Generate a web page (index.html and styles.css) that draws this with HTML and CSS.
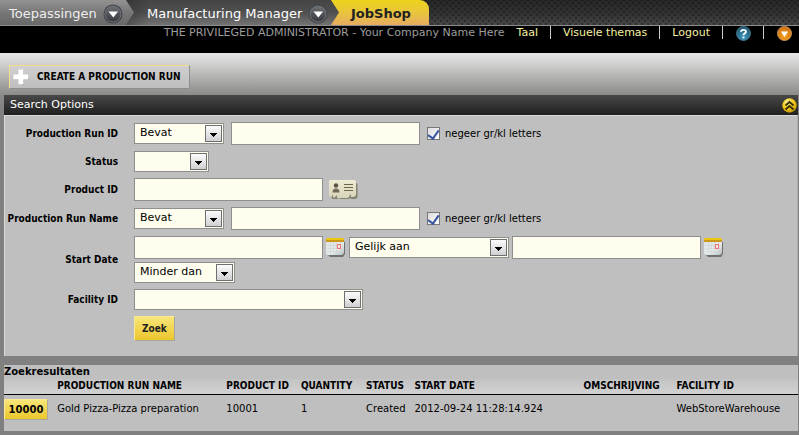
FILE: index.html
```html
<!DOCTYPE html>
<html lang="nl">
<head>
<meta charset="utf-8">
<title>JobShop</title>
<link rel="stylesheet" href="styles.css">
</head>
<body>
<svg class="defs" width="0" height="0" aria-hidden="true">
  <defs>
    <linearGradient id="btnFace" x1="0" y1="0" x2="0" y2="1"><stop offset="0" stop-color="#fdfdfd"/><stop offset="1" stop-color="#cfcfd2"/></linearGradient>
    <linearGradient id="knob" x1="0" y1="0" x2="0" y2="1"><stop offset="0" stop-color="#6c7075"/><stop offset="1" stop-color="#34373b"/></linearGradient>
    <radialGradient id="blue" cx=".5" cy=".75" r=".7"><stop offset="0" stop-color="#3f9ac0"/><stop offset="1" stop-color="#1c5670"/></radialGradient>
    <radialGradient id="orange" cx=".5" cy=".7" r=".7"><stop offset="0" stop-color="#f9a21c"/><stop offset="1" stop-color="#c96e12"/></radialGradient>
    <radialGradient id="gold" cx=".4" cy=".3" r=".8"><stop offset="0" stop-color="#fff3a8"/><stop offset=".5" stop-color="#f2c713"/><stop offset="1" stop-color="#b98a00"/></radialGradient>
    <linearGradient id="paper" x1="0" y1="0" x2="1" y2="1"><stop offset="0" stop-color="#dfe5e5"/><stop offset=".6" stop-color="#e6e9e9"/><stop offset="1" stop-color="#b9bcbc"/></linearGradient>
    <linearGradient id="cardFace" x1="0" y1="0" x2="0" y2="1"><stop offset="0" stop-color="#f0ecd4"/><stop offset="1" stop-color="#d8d4b8"/></linearGradient>
    <symbol id="drop" viewBox="0 0 17 17"><rect x=".5" y=".5" width="16" height="16" fill="url(#btnFace)" stroke="#6f6f6f"/><path d="M5 8h7v1h-1v1h-1v1H9v1H8v-1H7v-1H6V9H5z" fill="#000"/></symbol>
    <symbol id="tabKnob" viewBox="0 0 20 20"><circle cx="10" cy="10" r="9.500" fill="#3f4246"/><circle cx="10" cy="10" r="8" fill="url(#knob)" stroke="#70747a" stroke-width="1"/><path d="M5.500 7.500h9.500l-4.700 6z" fill="#fff"/></symbol>
    <symbol id="calendar" viewBox="0 0 19 19"><path d="M2 4h17v12l-2 3H4l-2-2z" fill="#6f7070"/><path d="M0 3h18v11q0 3-3 3H3q-3 0-3-3z" fill="url(#paper)"/><path d="M1 7.500h16M1 10.500h16M1 13.500h14M4.500 4v12M7.500 4v12M10.500 4v12M14.500 4v12" stroke="#cdd4d4" stroke-width=".6"/><path d="M0 1h18v3H0z" fill="#c9981c"/><path d="M1 0h16l1 2H0z" fill="#edc70c"/><rect x="11.500" y="6.500" width="3" height="4" fill="#fbe3e3" stroke="#f0737a"/></symbol>
  </defs>
</svg>

<header>
  <nav class="tabs">
    <a class="tab tab-apps" href="#">Toepassingen <svg width="20" height="20" aria-hidden="true"><use href="#tabKnob"/></svg></a>
    <a class="tab tab-manager" href="#">Manufacturing Manager <svg width="20" height="20" aria-hidden="true"><use href="#tabKnob"/></svg></a>
    <a class="tab tab-current" href="#">JobShop</a>
  </nav>
  <div class="userbar">
    <span class="who">THE PRIVILEGED ADMINISTRATOR - Your Company Name Here</span>
    <a class="first" href="#">Taal</a>
    <a href="#">Visuele themas</a>
    <a href="#">Logout</a>
    <a class="icon" href="#" aria-label="Help"><svg width="15" height="15" viewBox="0 0 15 15"><circle cx="7.500" cy="7.500" r="7" fill="url(#blue)" stroke="#4f8399" stroke-width=".8"/><path d="M5 5.800C5 3.300 10 3.200 10 5.700 10 7.400 7.500 7.200 7.500 9.200" fill="none" stroke="#fff" stroke-width="1.900"/><circle cx="7.500" cy="11.500" r="1.100" fill="#fff"/></svg></a>
    <a class="icon" href="#" aria-label="Menu"><svg width="15" height="15" viewBox="0 0 15 15"><circle cx="7.500" cy="7.500" r="7" fill="url(#orange)" stroke="#e0a468" stroke-width=".8"/><path d="M3.800 5.500h7.400L7.500 11z" fill="#fff"/></svg></a>
  </div>
</header>

<main>
  <button class="create" type="button"><svg width="16" height="16" viewBox="0 0 16 16" aria-hidden="true"><path d="M6 1h5v5h5v5h-5v5H6v-5H1V6h5z" fill="#999"/><path d="M5.500 0.500h5v5h5v5h-5v5h-5v-5h-5v-5h5z" fill="#fff"/></svg>CREATE A PRODUCTION RUN</button>

  <section class="panel">
    <div class="panel-title"><h2>Search Options</h2>
      <button class="collapse" type="button" aria-label="Inklappen"><svg width="15" height="15" viewBox="0 0 15 15"><circle cx="7.500" cy="7.500" r="7.200" fill="url(#gold)"/><path d="M3.500 7.500l4-3.500 4 3.500M3.500 11.500l4-3.500 4 3.500" fill="none" stroke="#3a3000" stroke-width="1.900"/></svg></button>
    </div>
    <form class="search">
      <label for="runId">Production Run ID</label>
      <div class="fields">
        <span class="pick op"><select aria-label="Operator"><option>Bevat</option></select><svg aria-hidden="true"><use href="#drop"/></svg></span>
        <input class="text" id="runId" type="text">
        <label class="check"><input type="checkbox" checked><span>negeer gr/kl letters</span></label>
      </div>
      <label for="status">Status</label>
      <div class="fields"><span class="pick status"><select id="status"><option></option></select><svg aria-hidden="true"><use href="#drop"/></svg></span></div>
      <label for="product">Product ID</label>
      <div class="fields lookup"><input class="text" id="product" type="text">
        <button class="plain" type="button" aria-label="Zoek product"><svg width="30" height="20" viewBox="0 0 30 20"><path d="M3 3h25q1.500 0 1.500 2v11q0 3-3 3h-3l-1-1-2 1h-8l-1-1-2 1H4z" fill="#85826f"/><path d="M2 0h24q2 0 2 2v12q0 3-3 3h-2v-3l-3 4H9v-3l-3 3-1-1v-2l-3 2-1-1V2q0-2 1-2z" fill="url(#cardFace)"/><circle cx="8" cy="5.500" r="2.200" fill="#5a5444"/><path d="M4.500 12.500q0-4 3.500-4t3.500 4z" fill="#716a56"/><path d="M16 4.500h9M16 7.500h9M16 10.500h9" stroke="#6b644f" stroke-width="1.200"/></svg></button>
      </div>
      <label for="runName">Production Run Name</label>
      <div class="fields">
        <span class="pick op"><select aria-label="Operator"><option>Bevat</option></select><svg aria-hidden="true"><use href="#drop"/></svg></span>
        <input class="text" id="runName" type="text">
        <label class="check"><input type="checkbox" checked><span>negeer gr/kl letters</span></label>
      </div>
      <label for="start">Start Date</label>
      <div class="fields dates">
        <input class="text" id="start" type="text">
        <button class="plain cal" type="button" aria-label="Kalender"><svg width="19" height="19"><use href="#calendar"/></svg></button>
        <span class="pick equal"><select aria-label="Operator"><option>Gelijk aan</option></select><svg aria-hidden="true"><use href="#drop"/></svg></span>
        <input class="text" type="text" aria-label="Einddatum">
        <button class="plain cal" type="button" aria-label="Kalender"><svg width="19" height="19"><use href="#calendar"/></svg></button>
        <span class="pick less"><select aria-label="Operator"><option>Minder dan</option></select><svg aria-hidden="true"><use href="#drop"/></svg></span>
      </div>
      <label for="facility">Facility ID</label>
      <div class="fields"><span class="pick facility"><select id="facility"><option></option></select><svg aria-hidden="true"><use href="#drop"/></svg></span></div>
      <div class="fields submit"><button class="gold zoek" type="submit">Zoek</button></div>
    </form>
  </section>

  <section class="results">
    <h3>Zoekresultaten</h3>
    <table>
      <colgroup><col class="c-id"><col class="c-name"><col class="c-product"><col class="c-qty"><col class="c-status"><col class="c-start"><col class="c-desc"><col></colgroup>
      <thead><tr><th></th><th>PRODUCTION RUN NAME</th><th>PRODUCT ID</th><th>QUANTITY</th><th>STATUS</th><th>START DATE</th><th>OMSCHRIJVING</th><th>FACILITY ID</th></tr></thead>
      <tbody><tr><td><a class="gold" href="#">10000</a></td><td>Gold Pizza-Pizza preparation</td><td>10001</td><td>1</td><td>Created</td><td>2012-09-24 11:28:14.924</td><td></td><td>WebStoreWarehouse</td></tr></tbody>
    </table>
  </section>
</main>
</body>
</html>
```
FILE: styles.css
```css
* { box-sizing: border-box; }
body {
  margin: 0;
  min-height: 100vh;
  background: #808080;
  color: #000;
  font: 10px/14px "DejaVu Sans", Verdana, sans-serif;
}
.defs { position: absolute; }
a { text-decoration: none; color: inherit; }
svg { display: block; flex: none; }
h2, h3 { margin: 0; }
input, select, button { font: inherit; color: inherit; margin: 0; }

.tabs {
  display: flex;
  height: 26px;
  border-bottom: 1px solid #8d8d8d;
  background:
    radial-gradient(circle, #1116 1px, transparent 2px) 0 0 / 6px 6px,
    radial-gradient(circle, #1116 1px, transparent 2px) 3px 3px / 6px 6px,
    linear-gradient(#282828, #363636 60%, #4a4a4a);
}
.tab {
  display: flex;
  align-items: center;
  gap: 6px;
  height: 25px;
  padding-top: 2px;
  font-size: 13px;
  color: #fff;
  white-space: nowrap;
  clip-path: polygon(0 0, calc(100% - 8px) 0, 100% 50%, calc(100% - 8px) 100%, 0 100%);
}
.tab-apps {
  z-index: 3;
  width: 134px;
  padding-left: 9px;
  color: #eee;
  background: linear-gradient(#929292, #777 50%, #686868);
}
.tab-manager {
  z-index: 2;
  width: 213px;
  margin-left: -8px;
  padding-left: 21px;
  background: linear-gradient(90deg, #2226, transparent 24px), linear-gradient(#444, #505050 50%, #727272);
}
.tab-current {
  z-index: 1;
  width: 98px;
  margin-left: -8px;
  padding-left: 20px;
  border-top-right-radius: 9px;
  clip-path: none;
  color: #222;
  font-weight: bold;
  background: linear-gradient(#ecd31c, #e9c53c 50%, #e6ab62);
}

.userbar {
  display: flex;
  justify-content: flex-end;
  height: 27px;
  background: #000;
  color: #9c9c9c;
  font-size: 11px;
}
.userbar a {
  height: 13px;
  padding: 0 12px;
  border-left: 1px solid #ccc;
  color: #f5f1a0;
}
.userbar a.first { border-left: 0; }
.userbar .icon { padding-left: 13px; }
.userbar .icon:last-child { padding-right: 7px; }

main {
  padding: 12px 1px 4px 4px;
  background: linear-gradient(#e8e8e8, #8b8b88 42px, #808080 60px);
}
.create {
  display: flex;
  align-items: center;
  gap: 8px;
  height: 24px;
  margin: 0 0 6px 5px;
  padding: 0 9px 0 3px;
  border: 1px solid #8e8e8e;
  border-top-color: #f1dd8b;
  border-left-color: #f1dd8b;
  background: linear-gradient(#d0d0d0, #bebebe);
  font: bold 10px/14px "DejaVu Sans Condensed", Tahoma, sans-serif;
}
.panel-title {
  display: flex;
  justify-content: space-between;
  align-items: center;
  height: 20px;
  padding: 0 1px 0 6px;
  background: linear-gradient(#484848, #202020);
  color: #fff;
}
.panel-title h2 { font-size: 11px; font-weight: normal; }
.collapse, .plain { padding: 0; border: 0; background: none; }

.search {
  display: grid;
  grid-template-columns: 113px 1fr;
  gap: 6px 16px;
  align-items: center;
  padding: 6px 0 15px;
  border: 1px solid #dcdcd4;
  border-right-color: #ababab;
  border-bottom: 0;
  background: #bfbfbf;
}
.search > label {
  text-align: right;
  white-space: nowrap;
  font: bold 10px/14px "DejaVu Sans Condensed", Tahoma, sans-serif;
}
.fields { display: flex; align-items: center; gap: 7px; }
.lookup { gap: 5px; }
.dates { flex-wrap: wrap; gap: 3px; }
.cal { margin-right: 1px; }
.submit { grid-column: 2; }
.text {
  width: 189px;
  height: 23px;
  padding: 0 5px;
  border: 1px solid #8f8f8f;
  border-radius: 0;
  background: #fffded;
}
.pick { position: relative; height: 21px; }
.pick select {
  appearance: none;
  width: 100%;
  height: 21px;
  padding: 0 22px 2px 5px;
  border: 1px solid #8f8f8f;
  border-radius: 0;
  background: #fffded;
  font-size: 11px;
}
.pick svg {
  position: absolute;
  top: 2px;
  right: 2px;
  width: 17px;
  height: 17px;
  pointer-events: none;
}
.op { width: 90px; }
.status { width: 75px; }
.equal { width: 160px; }
.less { width: 101px; }
.facility { width: 229px; }
.check { display: flex; align-items: center; gap: 5px; }
.check input {
  appearance: none;
  width: 13px;
  height: 13px;
  border: 1px solid #777;
  background: linear-gradient(135deg, #dcdcdc, #fff);
}
.check input:checked::after {
  content: "";
  display: block;
  width: 5px;
  height: 9px;
  margin: 0 auto;
  border: solid #3a55a0;
  border-width: 0 2px 2px 0;
  transform: rotate(35deg);
}
.gold {
  display: block;
  padding: 0 7px;
  border: 1px solid #a8a8a0;
  border-top-color: #f8ea94;
  border-left-color: #f8ea94;
  background: linear-gradient(#f8e678, #ecc62c);
  font-weight: bold;
}
.zoek {
  height: 25px;
  color: #222;
  font: bold 10px/14px "DejaVu Sans Condensed", Tahoma, sans-serif;
}

.results { margin-top: 9px; background: #bfbfbf; }
.results h3 { font-size: 10px; line-height: 14px; }
table { width: 100%; border-collapse: collapse; table-layout: fixed; }
thead { background: linear-gradient(#c3c3c3, #d2d2d2); }
th, td { padding: 0; text-align: left; white-space: nowrap; }
th {
  height: 15px;
  border-bottom: 1px solid #000;
  font: bold 10px/14px "DejaVu Sans Condensed", Tahoma, sans-serif;
}
td { height: 37px; padding: 4px 0 0; vertical-align: top; line-height: 20px; }
td .gold { width: 44px; height: 21px; line-height: 19px; text-align: center; padding: 0; }
.c-id { width: 6.7%; }
.c-name { width: 21.3%; }
.c-product { width: 9.4%; }
.c-qty { width: 8.2%; }
.c-status { width: 6.1%; }
.c-start { width: 21.3%; }
.c-desc { width: 11.7%; }
```
